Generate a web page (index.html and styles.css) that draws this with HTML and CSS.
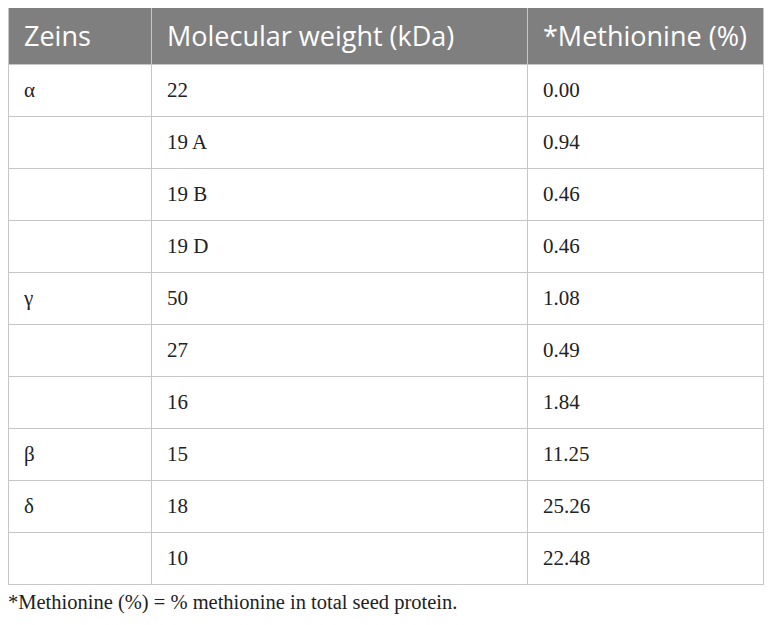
FILE: index.html
```html
<!DOCTYPE html>
<html lang="en">
<head>
    <meta charset="UTF-8">
    <title>Zeins methionine table</title>
    <link rel="stylesheet" href="styles.css">
</head>
<body>
    <div class="table-wrap">
        <table class="zein-table">
            <thead>
                <tr>
                    <th class="col-zein">Zeins</th>
                    <th class="col-mw">Molecular weight (kDa)</th>
                    <th class="col-met">*Methionine (%)</th>
                </tr>
            </thead>
            <tbody>
                <tr><td>&alpha;</td><td>22</td><td>0.00</td></tr>
                <tr><td></td><td>19 A</td><td>0.94</td></tr>
                <tr><td></td><td>19 B</td><td>0.46</td></tr>
                <tr><td></td><td>19 D</td><td>0.46</td></tr>
                <tr><td>&gamma;</td><td>50</td><td>1.08</td></tr>
                <tr><td></td><td>27</td><td>0.49</td></tr>
                <tr><td></td><td>16</td><td>1.84</td></tr>
                <tr><td>&beta;</td><td>15</td><td>11.25</td></tr>
                <tr><td>&delta;</td><td>18</td><td>25.26</td></tr>
                <tr><td></td><td>10</td><td>22.48</td></tr>
            </tbody>
        </table>
        <p class="table-note">*Methionine (%) = % methionine in total seed protein.</p>
    </div>
</body>
</html>
```

FILE: styles.css
```css
body {
    margin: 0;
    padding: 8px;
    background: #ffffff;
}

.table-wrap {
    width: 756px;
}

.zein-table {
    width: 100%;
    border-collapse: collapse;
    table-layout: fixed;
}

.zein-table th {
    background: #7f7f7f;
    color: #ffffff;
    font-family: "Open Sans", sans-serif;
    font-weight: normal;
    font-size: 27px;
    text-align: left;
    height: 56px;
    padding: 0 0 0 15px;
    border: 1.5px solid #c6c6c6;
    border-top: none;
    box-sizing: border-box;
}

.col-zein { width: 143px; }
.col-mw { width: 376px; }

.zein-table td {
    font-family: "Liberation Serif", "Times New Roman", serif;
    font-size: 21px;
    color: #222;
    height: 52px;
    padding: 0 0 0 15px;
    border: 1.5px solid #c6c6c6;
    box-sizing: border-box;
}

.table-note {
    margin: 6px 0 0 0;
    font-family: "Liberation Serif", "Times New Roman", serif;
    font-size: 20.5px;
    color: #222;
}
```
